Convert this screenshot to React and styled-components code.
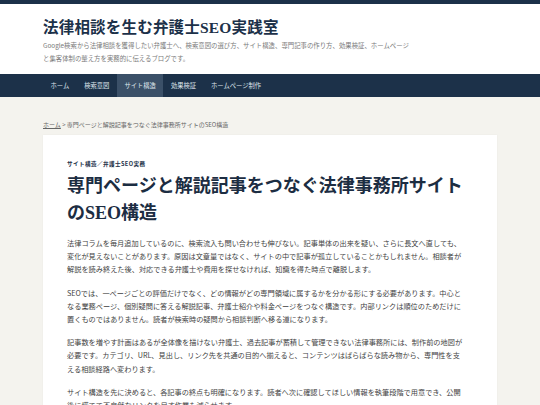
import styled, { createGlobalStyle } from 'styled-components';

const GlobalStyle = createGlobalStyle`
  html, body {
    margin: 0;
    padding: 0;
    background: #f4f3ee;
    font-family: "Noto Sans CJK JP", "Noto Sans", sans-serif;
    color: #3d3d3d;
  }
`;

const Header = styled.header`
  background: #ffffff;
  border-top: 4px solid #1c3149;
`;

const Inner = styled.div`
  width: 454px;
  margin: 0 auto;
`;

const Brand = styled.div`
  padding: 13px 0 9px;
`;

const SiteTitle = styled.h1`
  margin: 0;
  font-family: "Liberation Serif", "Noto Sans CJK JP", serif;
  font-size: 15.5px;
  line-height: 22px;
  font-weight: 700;
  color: #1c3149;
  letter-spacing: 0.2px;
`;

const Tagline = styled.p`
  margin: 0;
  width: 372px;
  font-size: 6.4px;
  line-height: 13px;
  color: #7a7a7a;
`;

const Nav = styled.nav`
  background: #1c3149;
`;

const NavList = styled.ul`
  display: flex;
  margin: 0 auto;
  padding: 0;
  list-style: none;
  width: 454px;
  height: 23px;
`;

const NavItem = styled.li`
  display: flex;
  align-items: center;
  padding: 0 7.5px;
  font-size: 6.3px;
  color: #dfe5ec;
  background: ${props => (props.active ? '#3b5068' : 'transparent')};
`;

const Main = styled.main`
  padding-top: 22px;
`;

const Breadcrumb = styled.div`
  font-size: 6px;
  line-height: 12px;
  color: #666;
  margin-bottom: 4px;

  a {
    color: #666;
    text-decoration: underline;
  }
`;

const Card = styled.article`
  background: #ffffff;
  padding: 24px 30px 20px 24px;
  box-shadow: 0 0 2px rgba(0, 0, 0, 0.04);
`;

const Category = styled.div`
  font-size: 5.6px;
  line-height: 10px;
  font-weight: 700;
  color: #1c3149;
  letter-spacing: 0.4px;
`;

const Title = styled.h2`
  margin: 4px 0 10px;
  font-family: "Liberation Serif", "Noto Sans CJK JP", serif;
  font-size: 18px;
  line-height: 27px;
  font-weight: 700;
  color: #1c2d42;
`;

const Paragraph = styled.p`
  margin: 0 0 10px;
  font-size: 7.2px;
  line-height: 13.2px;
  color: #3f3f3f;
`;

const navItems = ['ホーム', '検索意図', 'サイト構造', '効果検証', 'ホームページ制作'];

const paragraphs = [
  '法律コラムを毎月追加しているのに、検索流入も問い合わせも伸びない。記事単体の出来を疑い、さらに長文へ直しても、変化が見えないことがあります。原因は文章量ではなく、サイトの中で記事が孤立していることかもしれません。相談者が解説を読み終えた後、対応できる弁護士や費用を探せなければ、知識を得た時点で離脱します。',
  'SEOでは、一ページごとの評価だけでなく、どの情報がどの専門領域に属するかを分かる形にする必要があります。中心となる業務ページ、個別疑問に答える解説記事、弁護士紹介や料金ページをつなぐ構造です。内部リンクは順位のためだけに置くものではありません。読者が検索時の疑問から相談判断へ移る道になります。',
  '記事数を増やす計画はあるが全体像を描けない弁護士、過去記事が蓄積して管理できない法律事務所には、制作前の地図が必要です。カテゴリ、URL、見出し、リンク先を共通の目的へ揃えると、コンテンツはばらばらな読み物から、専門性を支える相談経路へ変わります。',
  'サイト構造を先に決めると、各記事の終点も明確になります。読者へ次に確認してほしい情報を執筆段階で用意でき、公開後に慌てて不自然なリンクを足す作業も減らせます。',
];

function App() {
  return (
    <>
      <GlobalStyle />
      <Header>
        <Inner>
          <Brand>
            <SiteTitle>法律相談を生む弁護士SEO実践室</SiteTitle>
            <Tagline>
              Google検索から法律相談を獲得したい弁護士へ、検索意図の選び方、サイト構造、専門記事の作り方、効果検証、ホームページと集客体制の整え方を実務的に伝えるブログです。
            </Tagline>
          </Brand>
        </Inner>
      </Header>
      <Nav>
        <NavList>
          {navItems.map(item => (
            <NavItem key={item} active={item === 'サイト構造' ? 1 : 0}>
              {item}
            </NavItem>
          ))}
        </NavList>
      </Nav>
      <Main>
        <Inner>
          <Breadcrumb>
            <a>ホーム</a> &gt; 専門ページと解説記事をつなぐ法律事務所サイトのSEO構造
          </Breadcrumb>
          <Card>
            <Category>サイト構造／弁護士SEO実務</Category>
            <Title>専門ページと解説記事をつなぐ法律事務所サイトのSEO構造</Title>
            {paragraphs.map(text => (
              <Paragraph key={text.slice(0, 10)}>{text}</Paragraph>
            ))}
          </Card>
        </Inner>
      </Main>
    </>
  );
}

export default App;
